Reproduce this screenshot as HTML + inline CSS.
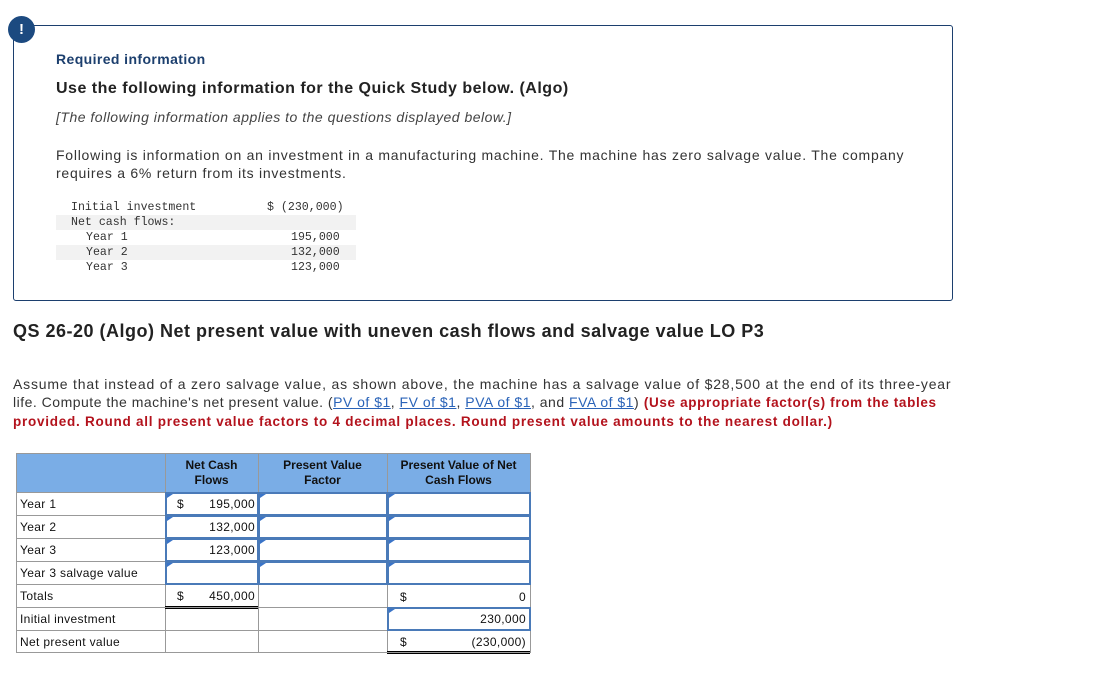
<!DOCTYPE html>
<html><head><meta charset="utf-8"><style>
*{margin:0;padding:0;box-sizing:border-box}
body{width:1094px;height:689px;background:#fff;position:relative;font-family:"Liberation Sans",Arial,sans-serif;color:#222;overflow:hidden}
.a{position:absolute;white-space:nowrap}
.mono{font-family:"Liberation Mono",monospace;font-size:11.6px;color:#333}
.inp{position:absolute;border:2px solid #4a7ab8;background:#fff}
.inp:before{content:"";position:absolute;left:0;top:0;border-left:6px solid #3a74c8;border-bottom:4px solid transparent}
.t{position:absolute;font-size:12px;color:#111;white-space:nowrap;letter-spacing:0.35px}
a{color:#2a63b8;text-decoration:underline}
</style></head><body>
<div class="a" style="left:13px;top:25px;width:940px;height:276px;border:1px solid #1c3f6e;border-radius:3px"></div>
<div class="a" style="left:8px;top:16px;width:27px;height:27px;border-radius:50%;background:#1c4a80;color:#fff;font-weight:bold;font-size:15px;text-align:center;line-height:27px">!</div>
<div class="a" style="left:56px;top:51px;font-size:14px;font-weight:bold;color:#1c3f6e;letter-spacing:0.4px">Required information</div>
<div class="a" style="left:56px;top:80px;font-size:16px;font-weight:bold;color:#222;letter-spacing:0.5px">Use the following information for the Quick Study below. (Algo)</div>
<div class="a" style="left:56px;top:109px;font-size:14px;font-style:italic;color:#444;letter-spacing:0.5px">[The following information applies to the questions displayed below.]</div>
<div class="a" style="left:56px;top:146px;font-size:14px;color:#333;line-height:18px;letter-spacing:0.75px">Following is information on an investment in a manufacturing machine. The machine has zero salvage value. The company<br>requires a 6% return from its investments.</div>
<div class="a" style="left:56px;top:215px;width:300px;height:15px;background:#f2f2f2"></div>
<div class="a" style="left:56px;top:245px;width:300px;height:15px;background:#f2f2f2"></div>
<div class="a mono" style="left:71px;top:201px">Initial investment</div>
<div class="a mono" style="left:267px;top:201px">$ (230,000)</div>
<div class="a mono" style="left:71px;top:216px">Net cash flows:</div>
<div class="a mono" style="left:86px;top:231px">Year 1</div>
<div class="a mono" style="left:86px;top:246px">Year 2</div>
<div class="a mono" style="left:86px;top:261px">Year 3</div>
<div class="a mono" style="left:291px;top:231px">195,000</div>
<div class="a mono" style="left:291px;top:246px">132,000</div>
<div class="a mono" style="left:291px;top:261px">123,000</div>
<div class="a" style="left:13px;top:321px;font-size:18px;font-weight:bold;color:#222;letter-spacing:0.5px">QS 26-20 (Algo) Net present value with uneven cash flows and salvage value LO P3</div>
<div class="a" style="left:13px;top:375px;font-size:14px;color:#333;line-height:18px;letter-spacing:0.8px">Assume that instead of a zero salvage value, as shown above, the machine has a salvage value of $28,500 at the end of its three-year<br><span style="letter-spacing:0.5px">life. Compute the machine's net present value. (<a>PV of $1</a>, <a>FV of $1</a>, <a>PVA of $1</a>, and <a>FVA of $1</a>)</span> <b style="color:#b3121c;font-size:13.5px;letter-spacing:0.65px">(Use appropriate factor(s) from the tables</b><br><b style="color:#b3121c;font-size:13.5px;letter-spacing:0.75px">provided. Round all present value factors to 4 decimal places. Round present value amounts to the nearest dollar.)</b></div>

<div class="a" style="left:16px;top:453px;width:515px;height:40px;background:#7aade6;border:1px solid #999"></div>
<div class="a" style="left:165px;top:453px;width:1px;height:200px;background:#999"></div>
<div class="a" style="left:258px;top:453px;width:1px;height:200px;background:#999"></div>
<div class="a" style="left:387px;top:453px;width:1px;height:200px;background:#999"></div>
<div class="a" style="left:16px;top:453px;width:1px;height:200px;background:#999"></div>
<div class="a" style="left:530px;top:453px;width:1px;height:200px;background:#999"></div>
<div class="t" style="left:165px;top:458px;width:93px;text-align:center;font-weight:bold;line-height:15px;letter-spacing:0">Net Cash<br>Flows</div>
<div class="t" style="left:258px;top:458px;width:129px;text-align:center;font-weight:bold;line-height:15px;letter-spacing:0">Present Value<br>Factor</div>
<div class="t" style="left:387px;top:458px;width:143px;text-align:center;font-weight:bold;line-height:15px;letter-spacing:0">Present Value of Net<br>Cash Flows</div>
<div class="a" style="left:16px;top:515px;width:515px;height:1px;background:#999"></div>
<div class="a" style="left:16px;top:538px;width:515px;height:1px;background:#999"></div>
<div class="a" style="left:16px;top:561px;width:515px;height:1px;background:#999"></div>
<div class="a" style="left:16px;top:584px;width:515px;height:1px;background:#999"></div>
<div class="a" style="left:16px;top:607px;width:515px;height:1px;background:#999"></div>
<div class="a" style="left:16px;top:630px;width:515px;height:1px;background:#999"></div>
<div class="a" style="left:16px;top:652px;width:515px;height:1px;background:#999"></div>
<div class="a" style="left:165px;top:606px;width:93px;height:3px;border-top:1px solid #000;border-bottom:1px solid #000"></div>
<div class="a" style="left:387px;top:651px;width:143px;height:3px;border-top:1px solid #000;border-bottom:1px solid #000"></div>

<div class="inp" style="left:165px;top:492px;width:94px;height:24px"></div>
<div class="inp" style="left:258px;top:492px;width:130px;height:24px"></div>
<div class="inp" style="left:387px;top:492px;width:144px;height:24px"></div>
<div class="inp" style="left:165px;top:515px;width:94px;height:24px"></div>
<div class="inp" style="left:258px;top:515px;width:130px;height:24px"></div>
<div class="inp" style="left:387px;top:515px;width:144px;height:24px"></div>
<div class="inp" style="left:165px;top:538px;width:94px;height:24px"></div>
<div class="inp" style="left:258px;top:538px;width:130px;height:24px"></div>
<div class="inp" style="left:387px;top:538px;width:144px;height:24px"></div>
<div class="inp" style="left:165px;top:561px;width:94px;height:24px"></div>
<div class="inp" style="left:258px;top:561px;width:130px;height:24px"></div>
<div class="inp" style="left:387px;top:561px;width:144px;height:24px"></div>
<div class="inp" style="left:387px;top:607px;width:144px;height:24px"></div>

<div class="t" style="left:20px;top:497px">Year 1</div>
<div class="t" style="left:20px;top:520px">Year 2</div>
<div class="t" style="left:20px;top:543px">Year 3</div>
<div class="t" style="left:20px;top:566px">Year 3 salvage value</div>
<div class="t" style="left:20px;top:589px">Totals</div>
<div class="t" style="left:20px;top:612px">Initial investment</div>
<div class="t" style="left:20px;top:635px">Net present value</div>

<div class="t" style="left:177px;top:497px">$</div>
<div class="t" style="left:195px;top:497px;width:60px;text-align:right">195,000</div>
<div class="t" style="left:195px;top:520px;width:60px;text-align:right">132,000</div>
<div class="t" style="left:195px;top:543px;width:60px;text-align:right">123,000</div>
<div class="t" style="left:177px;top:589px">$</div>
<div class="t" style="left:195px;top:589px;width:60px;text-align:right">450,000</div>
<div class="t" style="left:400px;top:590px">$</div>
<div class="t" style="left:460px;top:590px;width:66px;text-align:right">0</div>
<div class="t" style="left:460px;top:612px;width:66px;text-align:right">230,000</div>
<div class="t" style="left:400px;top:635px">$</div>
<div class="t" style="left:460px;top:635px;width:66px;text-align:right">(230,000)</div>
</body></html>
